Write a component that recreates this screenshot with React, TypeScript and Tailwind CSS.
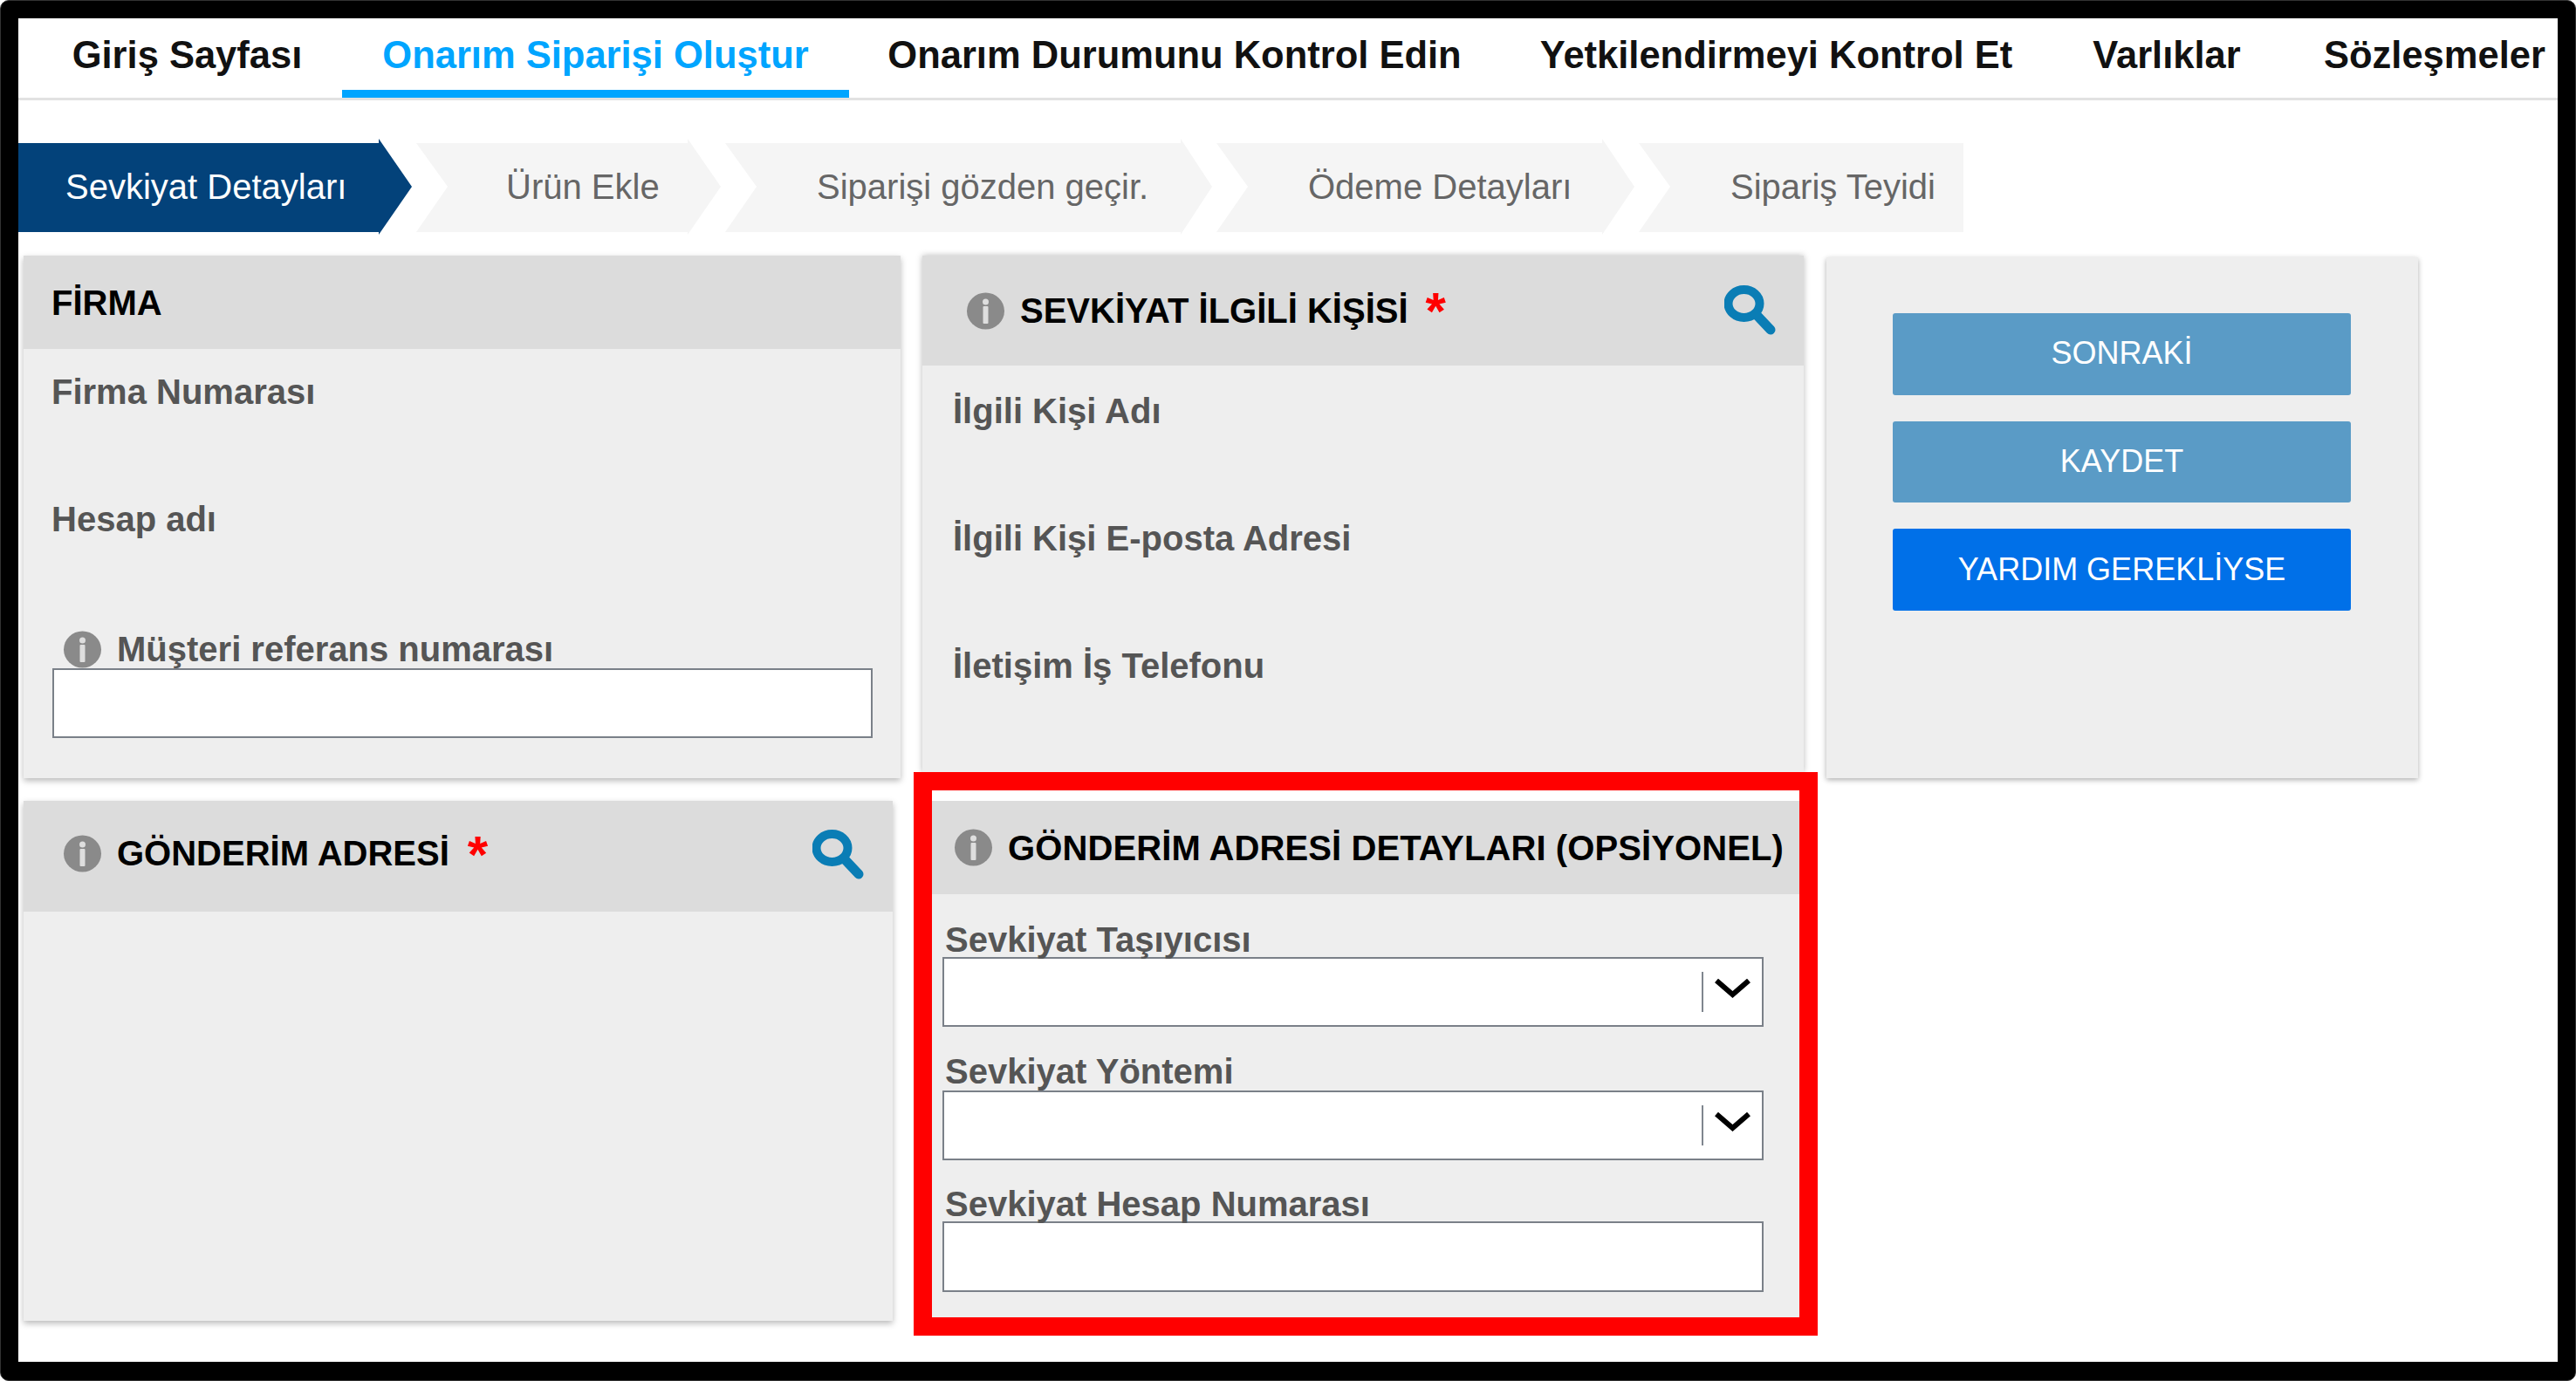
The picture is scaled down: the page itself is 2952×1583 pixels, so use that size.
import React from "react";

const Info = () => (
  <svg width="45" height="43" viewBox="0 0 45 43" className="shrink-0">
    <ellipse cx="22.5" cy="21.5" rx="21.5" ry="21" fill="#8a8a8a" />
    <circle cx="22.5" cy="11" r="3.5" fill="#dedede" />
    <rect x="19.5" y="16" width="6" height="20" rx="1" fill="#dedede" />
  </svg>
);

const Search = () => (
  <svg width="59" height="58" viewBox="0 0 59 58" className="shrink-0">
    <ellipse cx="22.5" cy="21" rx="18" ry="16" fill="none" stroke="#0a7db5" strokeWidth="10" />
    <path d="M36 33 L53 51" stroke="#0a7db5" strokeWidth="11" strokeLinecap="round" />
  </svg>
);

const Chevron = () => (
  <svg width="43" height="22" viewBox="0 0 43 22" className="shrink-0">
    <path d="M3 2 L21.5 18 L40 2" fill="none" stroke="#000" strokeWidth="6" />
  </svg>
);

const Star = () => (
  <span className="block text-[60px] font-bold leading-[40px] text-[#ff0000] h-[40px]">*</span>
);

const Label = ({ children, className = "" }: { children: React.ReactNode; className?: string }) => (
  <div className={"text-[40px] leading-[40px] font-bold text-[#555555] whitespace-nowrap " + className}>{children}</div>
);

const Box = ({ className = "", children }: { className?: string; children?: React.ReactNode }) => (
  <div className={"bg-white border-2 border-[#7a8088] flex items-start justify-end " + className}>{children}</div>
);

const SelectBox = ({ className = "" }: { className?: string }) => (
  <Box className={"h-[80px] w-[941px] ml-[12px] " + className}>
    <div className="w-[2px] h-[46px] mt-[15px] bg-[#7f868e]" />
    <div className="mt-[23px] ml-[12px] mr-[12px]">
      <Chevron />
    </div>
  </Box>
);

const nav = [
  { t: "Giriş Sayfası", w: "w-[355px] text-center" },
  { t: "Onarım Siparişi Oluştur", w: "w-[581px] text-center", active: true },
  { t: "Onarım Durumunu Kontrol Edin", w: "w-[746px] text-center" },
  { t: "Yetkilendirmeyi Kontrol Et", w: "w-[633px] text-center" },
  { t: "Varlıklar", w: "w-[262px] text-center" },
  { t: "Sözleşmeler", w: "w-[297px] pl-[49px] text-left" },
];

export default function App() {
  return (
    <div className="w-[2952px] h-[1583px] bg-black border border-[#333333] p-[20px] rounded-[10px] font-['Liberation_Sans',Arial,sans-serif] overflow-hidden">
      <div className="w-[2910px] h-[1540px] bg-white flex flex-col">
        <div className="h-[94px] border-b-[3px] border-[#e2e2e2] flex shrink-0">
          <div className="w-[16px] shrink-0" />
          {nav.map((n) => (
            <div
              key={n.t}
              className={
                n.w +
                " h-[91px] pt-[17px] text-[43.5px] leading-[50px] font-bold whitespace-nowrap shrink-0 " +
                (n.active ? "border-b-[9px] border-[#00a5ff] text-[#00a5ff]" : "text-[#111111]")
              }
            >
              {n.t}
            </div>
          ))}
        </div>

        <div className="flex gap-[5px] mt-[44px] h-[110px] shrink-0 text-[40px] whitespace-nowrap text-[#666666]">
          <div className="w-[451px] pl-[54px] flex items-center bg-[#03427a] text-white [clip-path:polygon(0_5px,413px_5px,413px_0,451px_55px,413px_110px,413px_107px,0_107px)]">
            Sevkiyat Detayları
          </div>
          <div className="w-[349px] pl-[103px] flex items-center bg-[#f5f5f5] [clip-path:polygon(0_5px,311px_5px,311px_0,349px_55px,311px_110px,311px_107px,0_107px,36px_55px)]">
            Ürün Ekle
          </div>
          <div className="w-[558px] pl-[105px] flex items-center bg-[#f5f5f5] [clip-path:polygon(0_5px,522px_5px,522px_0,558px_55px,522px_110px,522px_107px,0_107px,36px_55px)]">
            Siparişi gözden geçir.
          </div>
          <div className="w-[479px] pl-[105px] flex items-center bg-[#f5f5f5] [clip-path:polygon(0_5px,442px_5px,442px_0,479px_55px,442px_110px,442px_107px,0_107px,36px_55px)]">
            Ödeme Detayları
          </div>
          <div className="w-[372px] pl-[105px] flex items-center bg-[#f5f5f5] [clip-path:polygon(0_5px,372px_5px,372px_107px,0_107px,36px_55px)]">
            Sipariş Teyidi
          </div>
        </div>

        <div className="flex mt-[24px] items-start">
          {/* column 1 */}
          <div className="w-[1005px] ml-[6px] shrink-0">
            <div className="h-[599px] bg-[#eeeeee] shadow-[0_3px_7px_rgba(0,0,0,0.28)]">
              <div className="h-[107px] bg-[#dcdcdc] pl-[32px] pt-[34px] text-[40px] leading-[40px] font-bold text-black">FİRMA</div>
              <div className="pt-[29px]">
                <Label className="pl-[32px]">Firma Numarası</Label>
                <Label className="pl-[32px] mt-[106px]">Hesap adı</Label>
                <div className="flex items-center pl-[45px] mt-[109px] h-[40px]">
                  <Info />
                  <Label className="ml-[17px]">Müşteri referans numarası</Label>
                </div>
                <Box className="h-[80px] w-[940px] ml-[33px] mt-[2px]" />
              </div>
            </div>

            <div className="w-[996px] h-[596px] mt-[26px] bg-[#eeeeee] shadow-[0_3px_7px_rgba(0,0,0,0.28)]">
              <div className="h-[127px] bg-[#dcdcdc] flex items-center pl-[45px] pr-[33px] pb-[7px]">
                <Info />
                <span className="ml-[17px] text-[40px] leading-[40px] font-bold text-black whitespace-nowrap">GÖNDERİM ADRESİ</span>
                <span className="ml-[21px] mt-[3px]"><Star /></span>
                <span className="ml-auto mt-[3px]"><Search /></span>
              </div>
            </div>
          </div>

          {/* column 2 */}
          <div className="w-[1036px] ml-[15px] shrink-0">
            <div className="ml-[10px] w-[1010px] h-[592px] bg-[#eeeeee] shadow-[0_0_7px_rgba(0,0,0,0.28)]">
              <div className="h-[126px] bg-[#dcdcdc] flex items-center pl-[50px] pr-[32px]">
                <Info />
                <span className="ml-[17px] text-[40px] leading-[40px] font-bold text-black whitespace-nowrap">SEVKİYAT İLGİLİ KİŞİSİ</span>
                <span className="ml-[20px] mt-[2px]"><Star /></span>
                <span className="ml-auto"><Search /></span>
              </div>
              <div className="pt-[32px]">
                <Label className="pl-[35px]">İlgili Kişi Adı</Label>
                <Label className="pl-[35px] mt-[106px]">İlgili Kişi E-posta Adresi</Label>
                <Label className="pl-[35px] mt-[106px]">İletişim İş Telefonu</Label>
              </div>
            </div>

            <div className="relative h-[646px] border-[21px] border-[#ff0000] bg-white pt-[12px]">
              <div className="h-[107px] bg-[#dcdcdc] flex items-center pl-[25px]">
                <Info />
                <span className="ml-[17px] text-[40px] tracking-[0.1px] leading-[40px] font-bold text-black whitespace-nowrap">GÖNDERİM ADRESİ DETAYLARI (OPSİYONEL)</span>
              </div>
              <div className="h-[485px] bg-[#eeeeee] pt-[32px]">
                <Label className="pl-[15px]">Sevkiyat Taşıyıcısı</Label>
                <SelectBox className="mt-[0px]" />
                <Label className="pl-[15px] mt-[31px]">Sevkiyat Yöntemi</Label>
                <SelectBox className="mt-[2px]" />
                <Label className="pl-[15px] mt-[30px]">Sevkiyat Hesap Numarası</Label>
                <Box className="h-[81px] w-[941px] ml-[12px]" />
              </div>
            </div>
          </div>

          {/* column 3 */}
          <div className="w-[678px] h-[597px] mt-[2px] ml-[10px] shrink-0 bg-[#eeeeee] shadow-[0_2px_6px_rgba(0,0,0,0.32)] pt-[64px] pl-[76px] pr-[77px] flex flex-col gap-[30px] text-[36px] text-white">
            <div className="h-[94px] pb-[2px] rounded-[3px] bg-[#5a9bc6] flex items-center justify-center">SONRAKİ</div>
            <div className="h-[93px] pb-[2px] rounded-[3px] bg-[#5a9bc6] flex items-center justify-center">KAYDET</div>
            <div className="h-[94px] rounded-[3px] bg-[#0070e8] flex items-center justify-center">YARDIM GEREKLİYSE</div>
          </div>
        </div>
      </div>
    </div>
  );
}
